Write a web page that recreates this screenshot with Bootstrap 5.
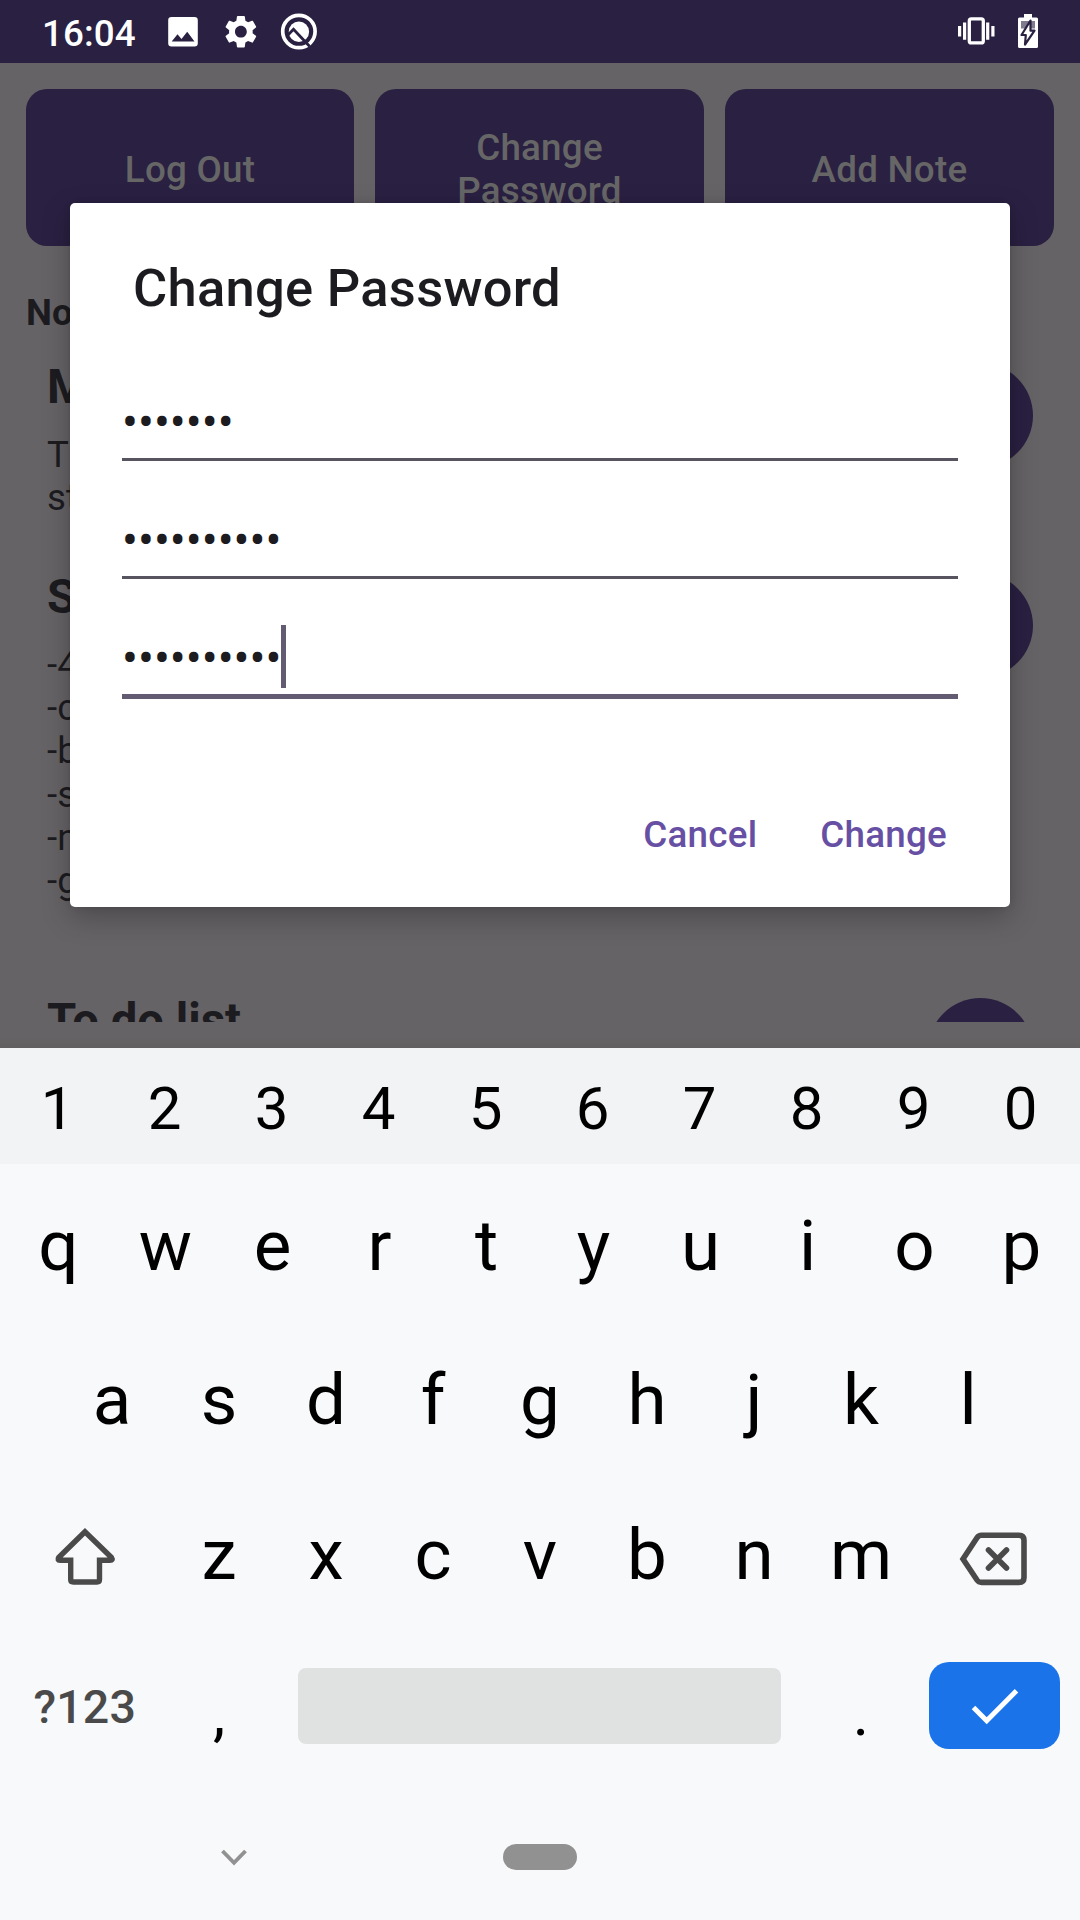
<!DOCTYPE html>
<html lang="en">
<head>
<meta charset="utf-8">
<meta name="viewport" content="width=device-width, initial-scale=1">
<title>Notes</title>
<link href="https://cdn.jsdelivr.net/npm/bootstrap@5.3.0/dist/css/bootstrap.min.css" rel="stylesheet">
<style>
  body { font-family: Roboto, "Noto Sans", sans-serif; background: #666366; color: #1c1b1f; }
  .phone { width: 1080px; height: 1920px; }
  .statusbar { height: 63px; background: #2a2042; color: #fff; padding: 1px 40px 0 42px; }
  .clock { font-size: 36.75px; font-weight: 500; line-height: 62px; padding-top: 3px; width: 123px; letter-spacing: .1px; }
  .app { height: 985px; padding: 26px 26px 26px; background: linear-gradient(#666366 0, #666366 975px, #625f61 985px); }
  .actions { display: grid; grid-template-columns: 328px 329px 329px; gap: 21px; }
  .app-btn { height: 157px; border: 0; border-radius: 21px; background: #2a2042; color: #666; font-size: 36.75px; font-weight: 500; line-height: 43px; padding: 3px 40px 0; letter-spacing: .25px; }
  .app-btn:hover { background: #2a2042; color: #666; }
  .section-label { font-size: 36.75px; font-weight: 700; line-height: 43px; margin-top: 45px; }
  .notes { height: 688px; overflow: hidden; padding: 0 21px; }
  .note-title { font-size: 47.25px; font-weight: 700; line-height: 55px; margin-top: -3px; }
  .note-body { font-size: 36.75px; line-height: 43.2px; margin-top: 18px; }
  .note { padding-top: 29px; min-height: 210px; }
  .note.tall { min-height: 425px; }
  .note:last-child .note-title { margin-top: -4px; }
  .fab { width: 105px; height: 105px; background: #2a2042; }
  .dlg { left: 70px; top: 203px; width: 940px; height: 704px; background: #fff; border-radius: 5px; padding: 54px 52px 0; box-shadow: 0 10px 28px rgba(0,0,0,.26), 0 0 6px rgba(0,0,0,.1); }
  .dlg-title { font-size: 52.5px; font-weight: 500; line-height: 62px; padding-left: 11px; margin: 0 0 57px; letter-spacing: .27px; }
  .pw { height: 118px; }
  .pw input, .pw input:focus { height: 85px; border: 0; border-bottom: 3px solid #57535f; border-radius: 0; padding: 12px 0 0 0; color: #1c1b1f; font-family: Roboto, sans-serif; font-size: 47.25px; background: none; }
  .pw.active input { border-bottom: 5px solid #625b71; height: 87px; }
  .caret { left: 159px; top: 13px; width: 5px; height: 63px; background: #625b71; }
  .dlg-actions { padding: 83px 11px 0 0; gap: 63px; }
  .dlg-actions .btn { color: #6750a4; font-size: 36.75px; font-weight: 500; line-height: 43px; padding: 0; border: 0; letter-spacing: .25px; }
  .kb { height: 872px; background: #f8f9fb; color: #000; }
  .digits { height: 116px; background: #f1f3f5; font-size: 60px; line-height: 116px; padding: 3px 5px 0 4px; }
  .letters { height: 155px; font-size: 70.9px; line-height: 155px; padding: 3px 5px 0; }
  .letters.first { padding-top: 4px; }
  .keycap { width: 107px; text-align: center; flex: none; line-height: inherit; }
  .wide { width: 160.5px; flex: none; }
  .glyph { padding-top: 7px; }
  .bottomrow { height: 155px; padding: 0 20px 2px 5px; }
  .sym { font-size: 46.5px; font-weight: 500; color: #4a4a4a; padding: 4px 1px 0 0; letter-spacing: .2px; }
  .punct { font-size: 62px; padding-top: 16px; }
  .space { width: 483px; height: 76px; border-radius: 8px; background: #e0e2e1; margin-left: 25px; margin-right: 27px; }
  .enter { width: 131px; height: 87px; border-radius: 20px; background: #1a73e8; margin-left: 14px; }
  .navrow { height: 146px; padding-left: 221px; }
  .pill { width: 74px; height: 26px; background: #919191; margin-left: 256px; }
</style>
</head>
<body>
<div class="phone position-relative overflow-hidden">
  <header class="statusbar d-flex align-items-center">
    <span class="clock">16:04</span>
    <svg width="155" height="40" viewBox="165 12 155 40" fill="#fff">
      <path fill-rule="evenodd" d="M171.500 17h23a3.300 3.300 0 0 1 3.300 3.300v23a3.300 3.300 0 0 1-3.300 3.300h-23a3.300 3.300 0 0 1-3.300-3.300v-23a3.300 3.300 0 0 1 3.300-3.300zM171.700 41.600h22.800l-7.300-9.800-5.700 7.300-4-4.900z"/>
      <g transform="translate(221.200 12) scale(1.640)"><path d="M19.140 12.940c.04-.3.06-.61.06-.94 0-.32-.02-.64-.07-.94l2.030-1.580c.18-.14.23-.41.12-.61l-1.920-3.320c-.12-.22-.37-.29-.59-.22l-2.390.96c-.5-.38-1.030-.7-1.620-.94l-.36-2.540c-.04-.24-.24-.41-.48-.41h-3.840c-.24 0-.43.17-.47.41l-.36 2.540c-.59.24-1.130.57-1.620.94l-2.390-.96c-.22-.08-.47 0-.59.22L2.740 8.870c-.12.21-.08.47.12.61l2.030 1.580c-.05.3-.09.63-.09.94s.02.64.07.94l-2.030 1.580c-.18.14-.23.41-.12.61l1.920 3.320c.12.22.37.29.59.22l2.390-.96c.5.38 1.030.7 1.620.94l.36 2.540c.05.24.24.41.48.41h3.840c.24 0 .44-.17.47-.41l.36-2.540c.59-.24 1.130-.56 1.620-.94l2.390.96c.22.08.47 0 .59-.22l1.920-3.320c.12-.22.07-.47-.12-.61l-2.010-1.580zM12 15.600c-1.980 0-3.600-1.620-3.600-3.600s1.620-3.600 3.600-3.600 3.600 1.620 3.600 3.600-1.620 3.600-3.600 3.600z"/></g>
      <circle cx="298.900" cy="31.500" r="16.200" fill="none" stroke="#fff" stroke-width="3.700"/>
      <circle cx="298.900" cy="31.800" r="10.200"/>
      <path d="M287.500 35.500l6-6.200 16 17" fill="none" stroke="#2a2042" stroke-width="2.800"/>
    </svg>
    <svg class="ms-auto" width="85" height="40" viewBox="955 12 85 40">
      <rect x="969.300" y="18.900" width="14" height="24" rx="2" fill="none" stroke="#fff" stroke-width="3.300"/>
      <path d="M959.600 26v10.500M964.600 22.500v17.300M987.700 22.500v17.300M992.900 26v10.500" stroke="#fff" stroke-width="3.200"/>
      <path d="M1024 14h8v3.500h4.500a1.500 1.500 0 0 1 1.500 1.500v27.500a1.500 1.500 0 0 1-1.500 1.500h-17a1.500 1.500 0 0 1-1.500-1.500v-27.500a1.500 1.500 0 0 1 1.500-1.500h4.500z" fill="#fff"/>
      <path d="M1021 21h14v7.500h-14z" fill="#7f7a8e"/>
      <path d="M1030.500 20.500l-9 14.500h4.300l-.8 9.700 9.500-14h-4z" fill="#fff" stroke="#2a2042" stroke-width="2.200" stroke-linejoin="round"/>
    </svg>
  </header>

  <main class="app">
    <div class="actions">
      <button class="btn app-btn">Log Out</button>
      <button class="btn app-btn">Change Password</button>
      <button class="btn app-btn">Add Note</button>
    </div>
    <div class="section-label">No</div>
    <div class="notes">
      <div class="note d-flex justify-content-between">
        <div><div class="note-title">M</div><div class="note-body">T<br>st</div></div>
        <div class="fab rounded-circle"></div>
      </div>
      <div class="note tall d-flex justify-content-between">
        <div><div class="note-title">S</div><div class="note-body">-4<br>-c<br>-b<br>-s<br>-n<br>-g</div></div>
        <div class="fab rounded-circle"></div>
      </div>
      <div class="note d-flex justify-content-between">
        <div class="note-title">To do list</div>
        <div class="fab rounded-circle"></div>
      </div>
    </div>
  </main>

  <section class="dlg position-absolute">
    <h2 class="dlg-title">Change Password</h2>
    <div class="pw"><input class="form-control shadow-none" type="password" value="1234567"></div>
    <div class="pw"><input class="form-control shadow-none" type="password" value="1234567890"></div>
    <div class="pw active position-relative"><input class="form-control shadow-none" type="password" value="1234567890"><span class="caret position-absolute"></span></div>
    <div class="dlg-actions d-flex justify-content-end">
      <button class="btn">Cancel</button>
      <button class="btn">Change</button>
    </div>
  </section>

  <section class="kb">
    <div class="digits d-flex">
      <span class="keycap">1</span><span class="keycap">2</span><span class="keycap">3</span><span class="keycap">4</span><span class="keycap">5</span><span class="keycap">6</span><span class="keycap">7</span><span class="keycap">8</span><span class="keycap">9</span><span class="keycap">0</span>
    </div>
    <div class="letters first d-flex justify-content-center">
      <span class="keycap">q</span><span class="keycap">w</span><span class="keycap">e</span><span class="keycap">r</span><span class="keycap">t</span><span class="keycap">y</span><span class="keycap">u</span><span class="keycap">i</span><span class="keycap">o</span><span class="keycap">p</span>
    </div>
    <div class="letters d-flex justify-content-center">
      <span class="keycap">a</span><span class="keycap">s</span><span class="keycap">d</span><span class="keycap">f</span><span class="keycap">g</span><span class="keycap">h</span><span class="keycap">j</span><span class="keycap">k</span><span class="keycap">l</span>
    </div>
    <div class="letters d-flex">
      <span class="wide glyph d-flex justify-content-center align-items-center">
        <svg width="64" height="64" viewBox="53 1524 64 64" fill="none" stroke="#4a4a4a" stroke-width="5.400"><path d="M85 1530.800L58.700 1556.500Q57 1559.300 60 1559.300H70.700V1578.500Q70.700 1581 73.200 1581H97Q99.500 1581 99.500 1578.500V1559.300H110Q113.300 1559.300 111.500 1556.500Z"/></svg>
      </span>
      <span class="keycap">z</span><span class="keycap">x</span><span class="keycap">c</span><span class="keycap">v</span><span class="keycap">b</span><span class="keycap">n</span><span class="keycap">m</span>
      <span class="wide glyph d-flex justify-content-center align-items-center">
        <svg width="72" height="64" viewBox="959 1525 72 64" fill="none" stroke="#4a4a4a" stroke-width="5.600"><path d="M963 1559L977 1537.800Q978.700 1535.300 981.500 1535.300H1019Q1024 1535.300 1024 1540.300V1577.400Q1024 1582.400 1019 1582.400H981.500Q978.700 1582.400 977 1580Z"/><path d="M988.500 1550l18 18M1006.500 1550l-18 18" stroke-linecap="round"/></svg>
      </span>
    </div>
    <div class="bottomrow d-flex align-items-center">
      <span class="wide text-center sym">?123</span>
      <span class="keycap punct">,</span>
      <span class="space"></span>
      <span class="keycap punct">.</span>
      <button class="btn enter p-0 border-0 d-flex align-items-center justify-content-center">
        <svg width="50" height="40" viewBox="969 1686 50 40" fill="none" stroke="#fff" stroke-width="5"><path d="M973.500 1707.500l13.200 13.200 29.800-30"/></svg>
      </button>
    </div>
    <div class="navrow d-flex align-items-center">
      <svg width="26" height="18" viewBox="221 1848 26 18" fill="none" stroke="#919191" stroke-width="3.900"><path d="M222.500 1851l11.500 11.800 11.500-11.800"/></svg>
      <span class="pill rounded-pill"></span>
    </div>
  </section>
</div>
<script src="https://cdn.jsdelivr.net/npm/bootstrap@5.3.0/dist/js/bootstrap.bundle.min.js"></script>
</body>
</html>
